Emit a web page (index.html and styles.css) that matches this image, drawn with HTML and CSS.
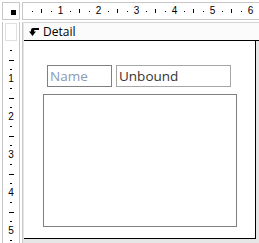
FILE: index.html
```html
<!DOCTYPE html>
<html>
<head>
<meta charset="utf-8">
<link rel="stylesheet" href="styles.css">
</head>
<body>
<div class="app">
  <div class="corner"><div class="corner-box"><span class="sq"></span></div></div>
  <div class="hruler">
    <div class="hticks">
      <span class="c"><i class="dot"></i></span><span class="c"><i class="ln"></i></span><span class="c"><i class="dot"></i></span><span class="c"><b>1</b></span>
      <span class="c"><i class="dot"></i></span><span class="c"><i class="ln"></i></span><span class="c"><i class="dot"></i></span><span class="c"><b>2</b></span>
      <span class="c"><i class="dot"></i></span><span class="c"><i class="ln"></i></span><span class="c"><i class="dot"></i></span><span class="c"><b>3</b></span>
      <span class="c"><i class="dot"></i></span><span class="c"><i class="ln"></i></span><span class="c"><i class="dot"></i></span><span class="c"><b>4</b></span>
      <span class="c"><i class="dot"></i></span><span class="c"><i class="ln"></i></span><span class="c"><i class="dot"></i></span><span class="c"><b>5</b></span>
      <span class="c"><i class="dot"></i></span><span class="c"><i class="ln"></i></span><span class="c"><i class="dot"></i></span><span class="c"><b>6</b></span>
    </div>
  </div>
  <div class="vcol">
    <div class="selector"></div>
    <div class="vticks">
      <span class="c"><i class="dot"></i></span><span class="c"><i class="ln"></i></span><span class="c"><i class="dot"></i></span><span class="c"><b>1</b></span>
      <span class="c"><i class="dot"></i></span><span class="c"><i class="ln"></i></span><span class="c"><i class="dot"></i></span><span class="c"><b>2</b></span>
      <span class="c"><i class="dot"></i></span><span class="c"><i class="ln"></i></span><span class="c"><i class="dot"></i></span><span class="c"><b>3</b></span>
      <span class="c"><i class="dot"></i></span><span class="c"><i class="ln"></i></span><span class="c"><i class="dot"></i></span><span class="c"><b>4</b></span>
      <span class="c"><i class="dot"></i></span><span class="c"><i class="ln"></i></span><span class="c"><i class="dot"></i></span><span class="c"><b>5</b></span>
      <span class="c"><i class="dot"></i></span>
    </div>
  </div>
  <div class="content">
    <div class="header">
      <svg class="sec-icon" width="10" height="8" viewBox="0 0 10 8"><path d="M0 3.5 L3.5 8 L7 3.5 Z M2 3.5 L2 2 Q2 0 4 0 L10 0 L10 2 L5.5 2 Q5 2 5 3.5 Z" fill="#000"/></svg>
      <span class="title">Detail</span>
    </div>
    <div class="canvas">
      <div class="row">
        <div class="label">Name</div>
        <div class="field">Unbound</div>
      </div>
      <div class="subform"></div>
    </div>
  </div>
</div>
</body>
</html>
```
FILE: styles.css
```css
html, body {
  margin: 0;
  padding: 0;
  background: #ffffff;
}
.app {
  display: grid;
  grid-template-columns: 22px 237px;
  grid-template-rows: 22px 221px;
  width: 259px;
  height: 243px;
  overflow: hidden;
  font-family: "Open Sans", "Noto Sans", sans-serif;
}
.corner {
  padding: 2px 2px 2px 2px;
}
.corner-box {
  box-sizing: border-box;
  height: 18px;
  width: 18px;
  border: 1px solid #c8c8c8;
  padding: 7px 0 0 8px;
}
.sq {
  display: block;
  width: 5px;
  height: 5px;
  background: #000;
}
.hruler {
  box-sizing: border-box;
  margin-top: 2px;
  height: 18px;
  border-top: 1px solid #c8c8c8;
  border-bottom: 1px solid #c8c8c8;
  border-left: 1px solid #c8c8c8;
  overflow: hidden;
}
.hticks {
  display: flex;
  padding-left: 4.25px;
  height: 16px;
  align-items: center;
}
.hticks .c {
  flex: 0 0 9.5px;
  display: flex;
  justify-content: center;
  align-items: center;
  height: 16px;
}
.hticks .dot {
  display: block;
  width: 1px;
  height: 1px;
  background: #000;
}
.hticks .ln {
  display: block;
  width: 1px;
  height: 4px;
  background: #000;
}
.c b {
  font-weight: normal;
  font-family: "Liberation Sans", Arial, sans-serif;
  font-size: 10px;
  line-height: 10px;
  color: #000;
}
.vcol {
  box-sizing: border-box;
  margin-left: 2px;
  width: 18px;
  border-left: 1px solid #c8c8c8;
  border-right: 1px solid #c8c8c8;
  overflow: hidden;
}
.selector {
  box-sizing: border-box;
  height: 18px;
  margin: 1px 2px 0 2px;
  border: 1px solid #e0e0e0;
  background: #ffffff;
}
.vticks {
  display: flex;
  flex-direction: column;
  padding-top: 4.75px;
}
.vticks .c {
  flex: 0 0 9.5px;
  display: flex;
  justify-content: center;
  align-items: center;
  height: 9.5px;
}
.vticks .dot {
  display: block;
  width: 2px;
  height: 1px;
  background: #000;
}
.vticks .ln {
  display: block;
  width: 5px;
  height: 1px;
  background: #000;
}
.content {
  display: flex;
  flex-direction: column;
  border-left: 1px solid #c8c8c8;
  background: #e6e6e6;
  overflow: hidden;
}
.header {
  display: flex;
  align-items: center;
  height: 19px;
  padding-left: 5px;
  margin-left: 1px;
  background: #fbfbfb;
  border-top: 1px solid #d4d4d4;
  border-bottom: 1px solid #000;
  box-sizing: border-box;
}
.sec-icon {
  display: block;
  margin-right: 4px;
}
.title {
  font-size: 12px;
  color: #000;
  line-height: 14px;
}
.canvas {
  box-sizing: border-box;
  width: 232px;
  height: 198px;
  margin-left: 1px;
  background: #fff;
  border-right: 1px solid #000;
  border-bottom: 1px solid #000;
  padding-top: 24px;
}
.row {
  display: flex;
  gap: 4px;
  margin-left: 23px;
}
.label, .field {
  box-sizing: border-box;
  height: 22px;
  display: flex;
  align-items: center;
  padding-left: 2px;
  font-size: 13.5px;
}
.label {
  width: 65px;
  border: 1px solid #808080;
  color: #8a9bb4;
}
.field {
  width: 115px;
  border: 1px solid #a6a6a6;
  color: #333;
}
.subform {
  box-sizing: border-box;
  margin: 7px 0 0 19px;
  width: 194px;
  height: 133px;
  border: 1px solid #808080;
}
```
